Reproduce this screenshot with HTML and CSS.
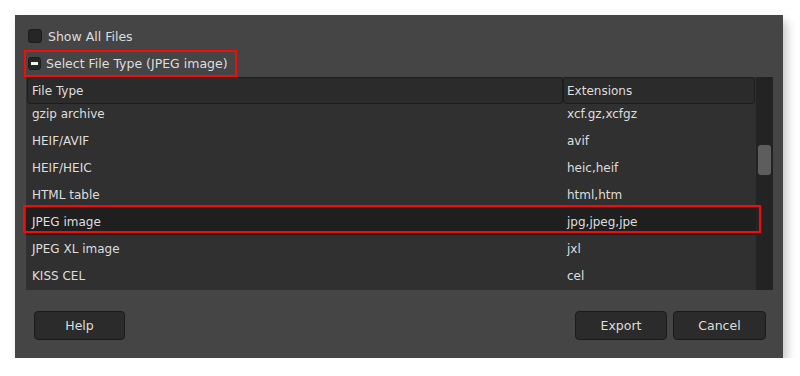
FILE: index.html
```html
<!DOCTYPE html>
<html>
<head>
<meta charset="utf-8">
<link rel="stylesheet" href="styles.css">
</head>
<body>
<div class="page">
  <div class="dialog">
    <div class="opt opt-first">
      <span class="check"></span>
      <span class="label">Show All Files</span>
    </div>
    <div class="opt">
      <div class="redbox">
        <span class="check check-ind"><span class="bar"></span></span>
        <span class="label">Select File Type (JPEG image)</span>
      </div>
    </div>
    <div class="table">
      <div class="grid">
        <div class="head">
          <div class="hcell">File Type</div>
          <div class="hcell hcell-ext">Extensions</div>
        </div>
        <div class="body">
          <div class="rows">
            <div class="row"><span class="c1">gzip archive</span><span class="c2">xcf.gz,xcfgz</span></div>
            <div class="row"><span class="c1">HEIF/AVIF</span><span class="c2">avif</span></div>
            <div class="row"><span class="c1">HEIF/HEIC</span><span class="c2">heic,heif</span></div>
            <div class="row"><span class="c1">HTML table</span><span class="c2">html,htm</span></div>
            <div class="row row-sel"><span class="c1">JPEG image</span><span class="c2">jpg,jpeg,jpe</span></div>
            <div class="row"><span class="c1">JPEG XL image</span><span class="c2">jxl</span></div>
            <div class="row"><span class="c1">KISS CEL</span><span class="c2">cel</span></div>
          </div>
        </div>
      </div>
      <div class="scroll"><div class="thumb"></div></div>
      <div class="sel-outline"></div>
    </div>
    <div class="footer">
      <button class="btn btn-help">Help</button>
      <div class="spacer"></div>
      <button class="btn btn-export">Export</button>
      <button class="btn btn-cancel">Cancel</button>
    </div>
  </div>
</div>
</body>
</html>
```

FILE: styles.css
```css
html, body {
  margin: 0;
  padding: 0;
  background: #ffffff;
}
body {
  font-family: "DejaVu Sans", "Liberation Sans", sans-serif;
  font-size: 12px;
  color: #dedede;
}
.page {
  padding: 15px 0 0 15px;
}
.dialog {
  width: 768px;
  height: 343px;
  box-sizing: border-box;
  background: #454545;
  padding: 7px 10px 0 11px;
  display: flex;
  flex-direction: column;
  box-shadow: 4px 6px 9px rgba(0, 0, 0, 0.22);
}
.opt {
  height: 27px;
  display: flex;
  align-items: center;
}
.opt .label {
  font-size: 12.5px;
}
.opt-first {
  height: 28px;
  padding-left: 2px;
}
.opt-first .label {
  margin-left: 6px;
}
.check {
  width: 13px;
  height: 13px;
  box-sizing: border-box;
  background: #262626;
  border: 1px solid #1c1c1c;
  border-radius: 3px;
  display: inline-flex;
  align-items: center;
  justify-content: center;
}
.opt-first .check {
  width: 14px;
  height: 14px;
}
.check-ind .bar {
  width: 7px;
  height: 3px;
  background: #f2f2f2;
}
.redbox {
  margin-left: -2px;
  width: 213px;
  height: 27px;
  box-sizing: border-box;
  border: 2px solid #f20d0d;
  display: flex;
  align-items: center;
  padding-left: 2px;
}
.redbox .label {
  margin-left: 5px;
}
.table {
  height: 213px;
  display: flex;
  position: relative;
}
.grid {
  flex: 1;
  display: flex;
  flex-direction: column;
  background: #303030;
}
.head {
  height: 27px;
  display: grid;
  grid-template-columns: 536px 192px;
  padding-left: 1px;
}
.hcell {
  background: #2b2b2b;
  border: 1px solid #1d1d1d;
  border-radius: 3px;
  display: flex;
  align-items: center;
  padding-left: 4px;
}
.hcell-ext {
  padding-left: 3px;
}
.body {
  flex: 1;
  overflow: hidden;
}
.rows {
  margin-top: -4px;
}
.row {
  height: 27px;
  display: grid;
  grid-template-columns: 537px 1fr;
  align-items: center;
}
.c1 {
  padding-left: 6px;
}
.c2 {
  padding-left: 4px;
}
.row-sel {
  background: #1f1f1f;
}
.sel-outline {
  position: absolute;
  left: -3px;
  top: 128px;
  width: 738px;
  height: 28px;
  box-sizing: border-box;
  border: 2px solid #f20d0d;
}
.scroll {
  width: 17px;
  background: #232323;
  display: flex;
  justify-content: center;
  padding-top: 68px;
  box-sizing: border-box;
}
.thumb {
  width: 13px;
  height: 30px;
  background: #5d5d5d;
  border-radius: 3px;
}
.footer {
  margin-top: 21px;
  display: flex;
  padding: 0 7px 0 8px;
}
.spacer {
  flex: 1;
}
.btn {
  height: 29px;
  box-sizing: border-box;
  background: #2b2b2b;
  border: 1px solid #1b1b1b;
  border-radius: 4px;
  color: #dedede;
  font-family: "DejaVu Sans", "Liberation Sans", sans-serif;
  font-size: 12.5px;
  padding: 0;
}
.btn-help {
  width: 91px;
}
.btn-export {
  width: 92px;
  margin-right: 6px;
}
.btn-cancel {
  width: 93px;
}
```
